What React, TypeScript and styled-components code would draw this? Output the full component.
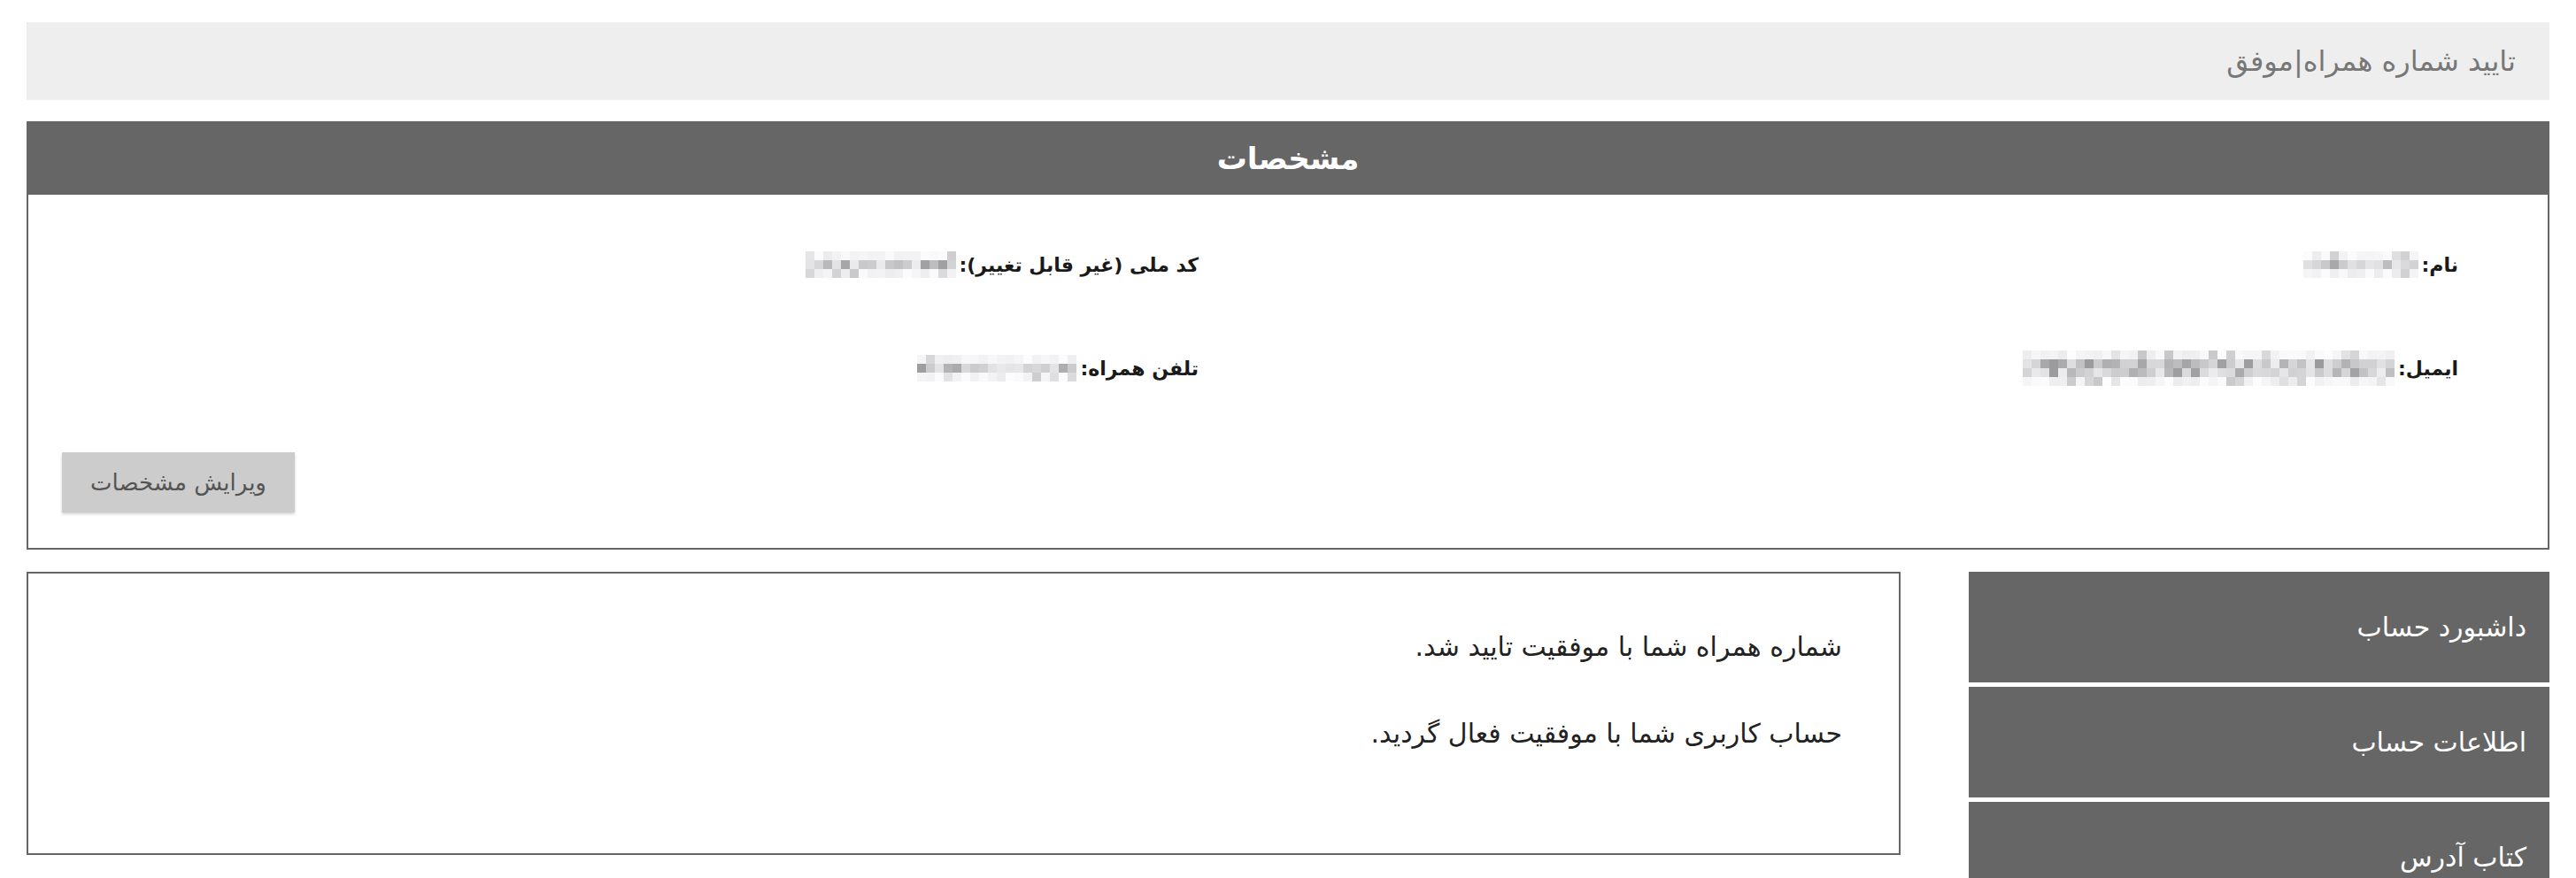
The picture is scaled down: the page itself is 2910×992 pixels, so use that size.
import React from "react";
import styled, { createGlobalStyle } from "styled-components";

const FONT = `"DejaVu Sans", "Noto Sans", sans-serif`;

const GlobalStyle = createGlobalStyle`
  *, *::before, *::after {
    box-sizing: border-box;
  }
  html, body {
    margin: 0;
    padding: 0;
    background: #fff;
  }
  body {
    font-family: ${FONT};
  }
`;

const Page = styled.div`
  direction: rtl;
  padding: 25px 30px 0;
  font-family: ${FONT};
`;

const TitleBar = styled.div`
  display: flex;
  align-items: center;
  height: 88px;
  padding: 0 38px;
  background: #eeeeee;
  color: #777;
  font-size: 32px;
`;

const Panel = styled.section`
  margin-top: 24px;
`;

const PanelHeader = styled.h2`
  margin: 0;
  height: 83px;
  display: flex;
  align-items: center;
  justify-content: center;
  background: #666;
  color: #fff;
  font-size: 34px;
  font-weight: bold;
`;

const PanelBody = styled.div`
  border: 2px solid #666;
  border-top: none;
  padding: 59px 0 40px;
`;

const Fields = styled.div`
  display: grid;
  grid-template-columns: 1fr 1fr;
  row-gap: 77px;
`;

const Field = styled.div`
  display: flex;
  align-items: center;
  gap: 4px;
  height: 40px;
  padding-right: 101px;
`;

const Label = styled.span`
  font-size: 22px;
  font-weight: bold;
  color: #1a1a1a;
  white-space: nowrap;
`;

const ButtonRow = styled.div`
  display: flex;
  justify-content: flex-end;
  margin-top: 75px;
  padding-left: 38px;
`;

const EditButton = styled.button`
  width: 263px;
  height: 68px;
  border: none;
  background: #cccccc;
  color: #555;
  font-family: ${FONT};
  font-size: 26px;
  box-shadow: 0 2px 3px rgba(0, 0, 0, 0.18);
  cursor: pointer;
`;

const BottomRow = styled.div`
  display: flex;
  align-items: flex-start;
  gap: 77px;
  margin-top: 25px;
`;

const Sidebar = styled.nav`
  display: flex;
  flex-direction: column;
  gap: 5px;
  width: 656px;
  flex-shrink: 0;
`;

const SideItem = styled.a`
  display: flex;
  align-items: center;
  height: 125px;
  padding-right: 26px;
  background: #666;
  color: #fff;
  font-size: 30px;
  text-decoration: none;
`;

const MessageBox = styled.div`
  flex: 1;
  height: 320px;
  border: 2px solid #666;
  padding: 63px 64px 0 0;
`;

const Message = styled.p`
  margin: 0 0 58px;
  line-height: 40px;
  font-size: 30px;
  color: #222;
`;

const MosaicGrid = styled.span<{ $cols: number }>`
  display: inline-grid;
  grid-template-columns: repeat(${(p) => p.$cols}, 10px);
  grid-auto-rows: 10px;
  direction: ltr;
`;

const Cell = styled.span``;

function Mosaic({ cols, rows, seed }: { cols: number; rows: number; seed: number }) {
  let s = seed;
  const rand = () => {
    s = (s * 9301 + 49297) % 233280;
    return s / 233280;
  };
  const cells = [];
  for (let r = 0; r < rows; r++) {
    for (let c = 0; c < cols; c++) {
      const edge = r === 0 || r === rows - 1;
      const v = rand();
      let g: number;
      if (edge) g = v < 0.2 ? 200 + Math.floor(rand() * 30) : 236 + Math.floor(rand() * 18);
      else g = v < 0.35 ? 150 + Math.floor(rand() * 45) : 200 + Math.floor(rand() * 38);
      cells.push(<Cell key={`${r}-${c}`} style={{ background: `rgb(${g},${g},${g + 2})` }} />);
    }
  }
  return <MosaicGrid $cols={cols}>{cells}</MosaicGrid>;
}

export default function App() {
  return (
    <>
      <GlobalStyle />
      <Page>
        <TitleBar>تایید شماره همراه|موفق</TitleBar>

        <Panel>
          <PanelHeader>مشخصات</PanelHeader>
          <PanelBody>
            <Fields>
              <Field>
                <Label>نام:</Label>
                <Mosaic cols={13} rows={3} seed={11} />
              </Field>
              <Field>
                <Label>کد ملی (غیر قابل تغییر):</Label>
                <Mosaic cols={17} rows={3} seed={47} />
              </Field>
              <Field>
                <Label>ایمیل:</Label>
                <Mosaic cols={42} rows={4} seed={83} />
              </Field>
              <Field>
                <Label>تلفن همراه:</Label>
                <Mosaic cols={18} rows={3} seed={129} />
              </Field>
            </Fields>
            <ButtonRow>
              <EditButton>ویرایش مشخصات</EditButton>
            </ButtonRow>
          </PanelBody>
        </Panel>

        <BottomRow>
          <Sidebar>
            <SideItem href="#">داشبورد حساب</SideItem>
            <SideItem href="#">اطلاعات حساب</SideItem>
            <SideItem href="#">کتاب آدرس</SideItem>
          </Sidebar>
          <MessageBox>
            <Message>شماره همراه شما با موفقیت تایید شد.</Message>
            <Message>حساب کاربری شما با موفقیت فعال گردید.</Message>
          </MessageBox>
        </BottomRow>
      </Page>
    </>
  );
}
